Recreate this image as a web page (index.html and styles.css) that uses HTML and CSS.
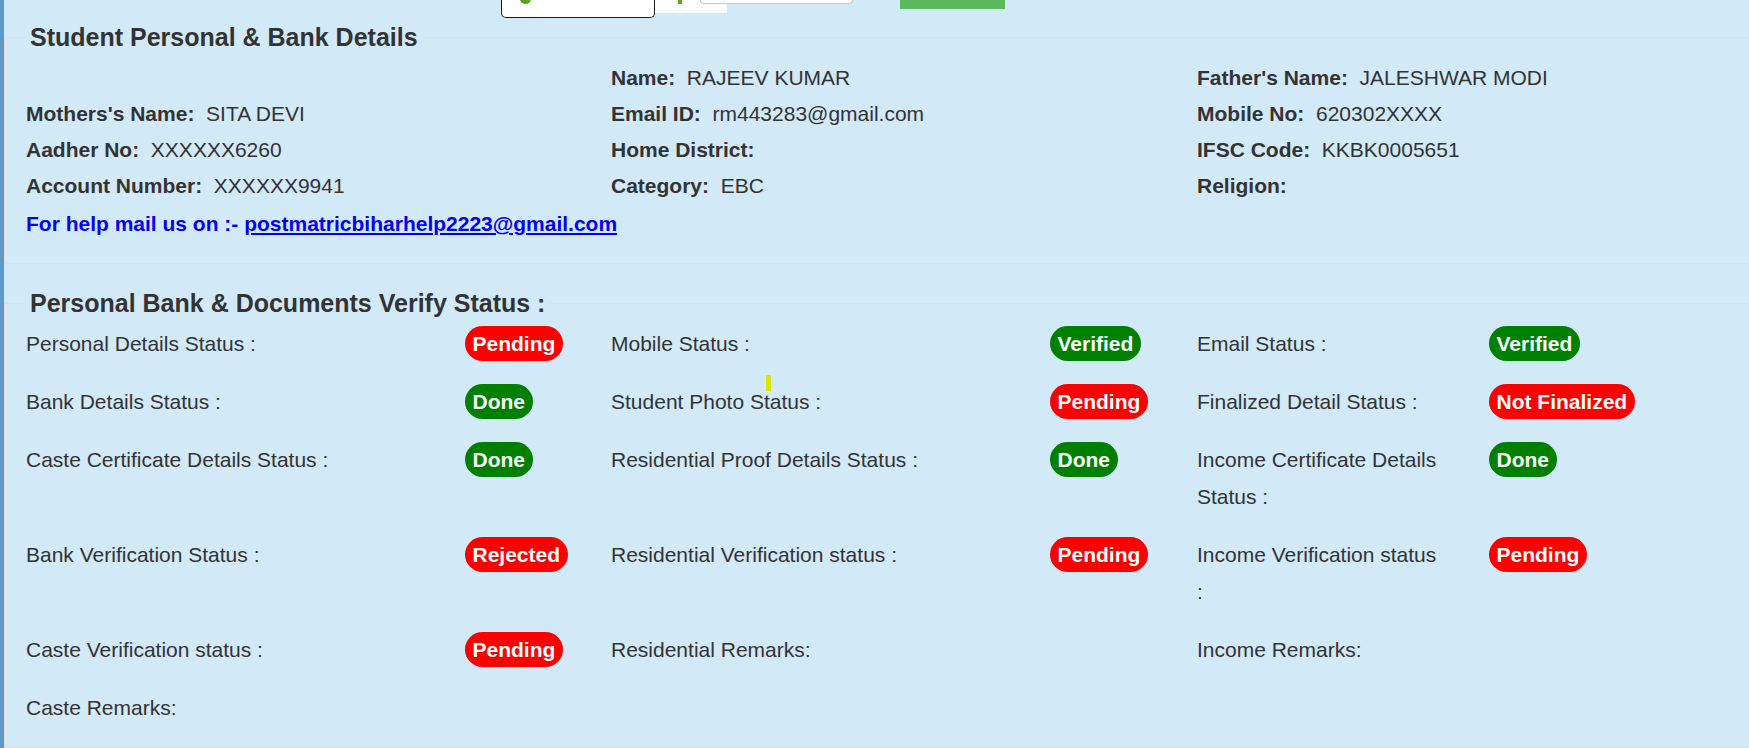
FILE: index.html
```html
<!DOCTYPE html>
<html lang="en">
<head>
<meta charset="utf-8">
<title>Student Details</title>
<link rel="stylesheet" href="styles.css">
</head>
<body>
<div class="page">
  <div class="topstrip">
    <div class="captcha"><span class="dot"></span></div>
    <div class="captcha-tail"><span class="tick"></span></div>
    <div class="cap-input"></div>
    <div class="cap-btn"></div>
  </div>

  <fieldset class="panel panel-info">
    <legend>Student Personal &amp; Bank Details</legend>
    <div class="info-grid">
      <div class="cell"></div>
      <div class="cell"><b>Name:</b>&nbsp; RAJEEV KUMAR</div>
      <div class="cell"><b>Father's Name:</b>&nbsp; JALESHWAR MODI</div>
      <div class="cell"><b>Mothers's Name:</b>&nbsp; SITA DEVI</div>
      <div class="cell"><b>Email ID:</b>&nbsp; rm443283@gmail.com</div>
      <div class="cell"><b>Mobile No:</b>&nbsp; 620302XXXX</div>
      <div class="cell"><b>Aadher No:</b>&nbsp; XXXXXX6260</div>
      <div class="cell"><b>Home District:</b></div>
      <div class="cell"><b>IFSC Code:</b>&nbsp; KKBK0005651</div>
      <div class="cell"><b>Account Number:</b>&nbsp; XXXXXX9941</div>
      <div class="cell"><b>Category:</b>&nbsp; EBC</div>
      <div class="cell"><b>Religion:</b></div>
    </div>
    <div class="help">For help mail us on :- <a href="#">postmatricbiharhelp2223@gmail.com</a></div>
  </fieldset>

  <fieldset class="panel panel-status">
    <legend>Personal Bank &amp; Documents Verify Status :</legend>
    <div class="status-grid">
      <div class="item"><span class="lbl">Personal Details Status :</span><span class="badge red">Pending</span></div>
      <div class="item"><span class="lbl">Mobile Status :</span><span class="badge green">Verified</span></div>
      <div class="item item-narrow"><span class="lbl">Email Status :</span><span class="badge green">Verified</span></div>

      <div class="item"><span class="lbl">Bank Details Status :</span><span class="badge green">Done</span></div>
      <div class="item"><span class="lbl">Student Photo Status :</span><span class="badge red">Pending</span></div>
      <div class="item item-narrow"><span class="lbl">Finalized Detail Status :</span><span class="badge red">Not Finalized</span></div>

      <div class="item"><span class="lbl">Caste Certificate Details Status :</span><span class="badge green">Done</span></div>
      <div class="item"><span class="lbl">Residential Proof Details Status :</span><span class="badge green">Done</span></div>
      <div class="item item-narrow"><span class="lbl">Income Certificate Details Status :</span><span class="badge green">Done</span></div>

      <div class="item"><span class="lbl">Bank Verification Status :</span><span class="badge red">Rejected</span></div>
      <div class="item"><span class="lbl">Residential Verification status :</span><span class="badge red">Pending</span></div>
      <div class="item item-narrow"><span class="lbl">Income Verification status :</span><span class="badge red">Pending</span></div>

      <div class="item"><span class="lbl">Caste Verification status :</span><span class="badge red">Pending</span></div>
      <div class="item"><span class="lbl">Residential Remarks:</span></div>
      <div class="item item-narrow"><span class="lbl">Income Remarks:</span></div>

      <div class="item"><span class="lbl">Caste Remarks:</span></div>
    </div>
  </fieldset>

  <span class="cursor-mark"></span>
</div>
</body>
</html>
```

FILE: styles.css
```css
* {
  box-sizing: border-box;
}

html,
body {
  margin: 0;
  padding: 0;
}

body {
  background: #d2e9f8;
  font-family: "Liberation Sans", Arial, sans-serif;
  font-size: 21px;
  color: #333333;
  overflow: hidden;
}

.page {
  position: relative;
  min-height: 748px;
  border-left: 4px solid #5d9cc7;
}

/* clipped controls at the very top (scrolled off) */
.topstrip {
  display: flex;
  align-items: flex-start;
  height: 19px;
  overflow: hidden;
}

.captcha {
  display: flex;
  margin-left: 497px;
  width: 154px;
  height: 18px;
  background: #ffffff;
  border: 1px solid #1a1a1a;
  border-top: 0;
  border-radius: 0 0 5px 5px;
}

.dot {
  display: block;
  width: 11px;
  height: 11px;
  margin: -7px 0 0 18px;
  border-radius: 50%;
  background: #5fa21c;
}

.captcha-tail {
  display: flex;
  width: 72px;
  height: 13px;
  background: #ffffff;
}

.tick {
  display: block;
  width: 4px;
  height: 4px;
  margin-left: 23px;
  background: #6aa820;
}

.cap-input {
  margin-left: -27px;
  width: 153px;
  height: 4px;
  background: #ffffff;
  border: 1px solid #c8c8c8;
  border-top: 0;
  border-radius: 0 0 4px 4px;
}

.cap-btn {
  margin-left: 47px;
  width: 105px;
  height: 9px;
  background: #5cb85c;
}

/* fieldsets */
.panel {
  margin: 0 -40px 0 0;
  padding: 5px 0 21px 21px;
  border: 1px solid #e8ddd6;
  min-width: 0;
}

.panel legend {
  padding: 0 4px;
  font-size: 25px;
  font-weight: bold;
  line-height: 36px;
  color: #333333;
}

.panel-status {
  margin-top: 21px;
  padding-top: 4px;
}

.info-grid {
  display: grid;
  grid-template-columns: 585px 586px 1fr;
  line-height: 36px;
}

.info-grid b {
  font-weight: bold;
}

.help {
  margin-top: 2px;
  line-height: 36px;
  font-weight: bold;
  color: #0000ff;
}

.help a {
  color: #0000ff;
  text-decoration: underline;
}

/* status grid */
.status-grid {
  display: grid;
  grid-template-columns: 585px 586px 1fr;
  row-gap: 21px;
  line-height: 37px;
}

.item {
  display: flex;
  align-items: flex-start;
}

.lbl {
  flex: 0 0 439px;
}

.item-narrow .lbl {
  flex: 0 0 246px;
  margin-right: 46px;
}

.badge {
  display: inline-block;
  margin-top: 1px;
  height: 35px;
  padding: 0 7.5px;
  border-radius: 18px;
  font-weight: bold;
  line-height: 35px;
  color: #ffffff;
  white-space: nowrap;
}

.badge.red {
  background: #ff0000;
}

.badge.green {
  background: #008000;
}

.cursor-mark {
  position: absolute;
  left: 762px;
  top: 375px;
  width: 5px;
  height: 16px;
  background: #d8e800;
}
```
